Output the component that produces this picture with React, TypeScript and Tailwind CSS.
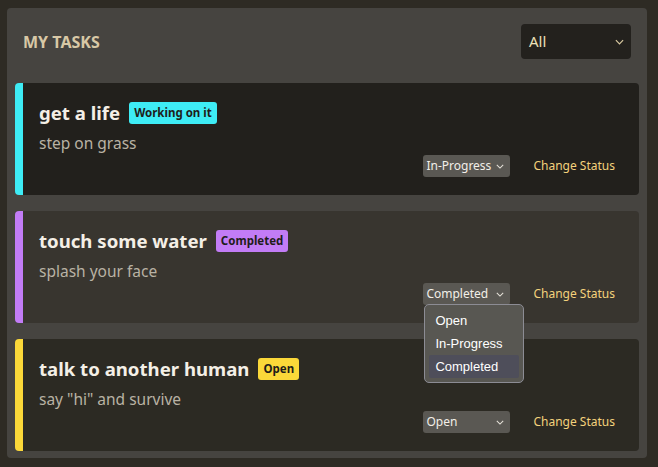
import React from 'react';

const tasks = [
  {
    title: 'get a life',
    description: 'step on grass',
    badge: 'Working on it',
    status: 'In-Progress',
    accent: 'border-l-[#3eecf5]',
    badgeBg: 'bg-[#3eecf5]',
    cardBg: 'bg-[#22201c]',
  },
  {
    title: 'touch some water',
    description: 'splash your face',
    badge: 'Completed',
    status: 'Completed',
    accent: 'border-l-[#c27cf6]',
    badgeBg: 'bg-[#c27cf6]',
    cardBg: 'bg-[#38352f]',
    open: true,
  },
  {
    title: 'talk to another human',
    description: 'say "hi" and survive',
    badge: 'Open',
    status: 'Open',
    accent: 'border-l-[#fbd839]',
    badgeBg: 'bg-[#fbd839]',
    cardBg: 'bg-[#2c2a23]',
  },
];

const Chevron = ({ className }: { className?: string }) => (
  <svg viewBox="0 0 10 6" className={className} fill="none" stroke="currentColor" strokeWidth="1.3">
    <path d="M1 1l4 4 4-4" />
  </svg>
);

const StatusMenu = () => (
  <div className="absolute left-[1px] top-[21px] z-10 w-[100px] rounded-[5px] border border-[#8c8c94] bg-[#585752] p-[4px] font-['Liberation_Sans',Arial,sans-serif] text-[13px] text-white">
    <div className="h-[23px] px-[6px] leading-[23px]">Open</div>
    <div className="h-[23px] px-[6px] leading-[23px]">In-Progress</div>
    <div className="h-[23px] rounded-[2px] bg-[#4e4e5a] px-[6px] leading-[23px]">Completed</div>
  </div>
);

export default function App() {
  return (
    <div className="min-h-[467px] bg-[#2e2b24] pt-[8px] pl-[7px] font-['Noto_Sans',sans-serif]">
      <div className="w-[640px] rounded-[4px] bg-[#464440] px-[8px] pb-[7px]">
        {/* Header */}
        <div className="flex items-start justify-between pt-[16px] pr-[8px] pl-[8px] pb-[24px]">
          <h1 className="mt-[9px] text-[16px] font-bold uppercase leading-[18px] text-[#d8c8a6]">My Tasks</h1>
          <div className="relative flex h-[35px] w-[110px] items-center justify-between rounded-[4px] bg-[#23211d] pl-[8px] pr-[7px] text-[15px] text-[#ece0b8]">
            <span>All</span>
            <Chevron className="h-[6px] w-[9px] text-[#d8c8a0]" />
          </div>
        </div>

        {/* Tasks */}
        <div className="flex flex-col gap-[16px]">
          {tasks.map((task, index) => (
            <div
              key={index}
              className={`flex h-[112px] flex-col rounded-[4px] border-l-[8px] ${task.accent} ${task.cardBg} pl-[16px] pr-[24px] pt-[17px] pb-[18px]`}
            >
              <div className="flex items-center gap-[9px]">
                <h2 className="text-[18.6px] font-bold leading-[26px] text-[#f4efe6]">{task.title}</h2>
                <span className={`rounded-[3px] ${task.badgeBg} px-[5px] text-[11.5px] font-bold leading-[22px] text-[#1f1d1a]`}>
                  {task.badge}
                </span>
              </div>
              <p className="mt-[5px] text-[15.5px] leading-[24px] text-[#b9b2a4]">{task.description}</p>
              <div className="mt-auto flex items-center justify-end gap-[23px]">
                <div className="relative">
                  <div className="flex h-[22px] w-[87px] items-center justify-between whitespace-nowrap rounded-[3px] bg-[#5a5853] pl-[3px] pr-[6px] text-[12px] text-[#f2efe8]">
                    <span>{task.status}</span>
                    <Chevron className="h-[5px] w-[8px] shrink-0 text-[#e6e2da]" />
                  </div>
                  {task.open && <StatusMenu />}
                </div>
                <span className="text-[12px] text-[#f4d27c]">Change Status</span>
              </div>
            </div>
          ))}
        </div>
      </div>
    </div>
  );
}
